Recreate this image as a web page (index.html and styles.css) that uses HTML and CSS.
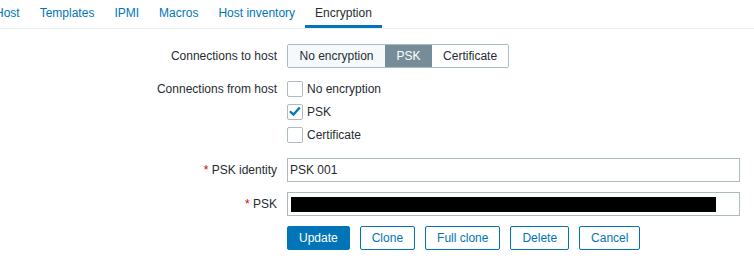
FILE: index.html
```html
<!DOCTYPE html>
<html>
<head>
<meta charset="utf-8">
<link rel="stylesheet" href="styles.css">
</head>
<body>
<nav class="tabs">
  <a class="tab">Host</a>
  <a class="tab">Templates</a>
  <a class="tab">IPMI</a>
  <a class="tab">Macros</a>
  <a class="tab">Host inventory</a>
  <a class="tab active">Encryption</a>
</nav>
<form class="form">
  <div class="label">Connections to host</div>
  <div class="control">
    <div class="seg">
      <span class="seg-item first">No encryption</span>
      <span class="seg-item on">PSK</span>
      <span class="seg-item">Certificate</span>
    </div>
  </div>

  <div class="label top">Connections from host</div>
  <ul class="checks">
    <li class="check"><span class="box"></span><span>No encryption</span></li>
    <li class="check"><span class="box"><svg width="14" height="14" viewBox="0 0 14 14"><polyline points="1.9,6.2 5.4,9.6 11.8,2.4" fill="none" stroke="#0275b8" stroke-width="2.2"/></svg></span><span>PSK</span></li>
    <li class="check last"><span class="box"></span><span>Certificate</span></li>
  </ul>

  <div class="label"><span class="req">*</span> PSK identity</div>
  <div class="control"><input class="field" type="text" value="PSK 001"></div>

  <div class="label"><span class="req">*</span> PSK</div>
  <div class="control"><div class="field pad"><span class="redact"></span></div></div>

  <div class="buttons">
    <span class="btn primary">Update</span>
    <span class="btn">Clone</span>
    <span class="btn">Full clone</span>
    <span class="btn">Delete</span>
    <span class="btn">Cancel</span>
  </div>
</form>
</body>
</html>
```

FILE: styles.css
```css
html, body {
  margin: 0;
  padding: 0;
  background: #ffffff;
}
body {
  font-family: "Liberation Sans", Arial, sans-serif;
  font-size: 12px;
  color: #1f2c33;
  width: 754px;
  height: 261px;
  overflow: hidden;
}
.tabs {
  display: flex;
  margin-left: -15px;
  border-bottom: 1px solid #ebeef0;
  height: 28px;
}
.tab {
  display: block;
  padding: 6px 10px 6px 10px;
  line-height: 14px;
  border-bottom: 3px solid transparent;
  color: #0275b8;
  white-space: nowrap;
}
.tab.active {
  color: #1f2c33;
  border-bottom-color: #0275b8;
}
.form {
  margin: 15px 0 0 0;
  display: grid;
  grid-template-columns: 277px 453px;
  column-gap: 10px;
  row-gap: 10px;
}
.label {
  text-align: right;
  line-height: 24px;
  white-space: nowrap;
}
.label.top {
  line-height: 23px;
}
.req {
  color: #d40000;
}
.control {
  display: flex;
  align-items: center;
  height: 24px;
}
.seg {
  display: inline-flex;
  border: 1px solid #acbbc2;
  border-radius: 2px;
  overflow: hidden;
}
.seg-item {
  display: block;
  line-height: 22px;
  padding: 0 11px;
  background: #ffffff;
  white-space: nowrap;
}
.seg-item.first {
  background: #f6f9fb;
  padding: 0 11.5px;
}
.seg-item.on {
  background: #768d99;
  color: #ffffff;
  padding: 0 11.5px;
}
.checks {
  list-style: none;
  margin: 0;
  padding: 0;
}
.check {
  display: flex;
  align-items: flex-start;
  height: 23px;
}
.check.last {
  height: 24px;
}
.box {
  box-sizing: border-box;
  width: 16px;
  height: 16px;
  margin-top: 3px;
  margin-right: 4px;
  border: 1px solid #acbbc2;
  border-radius: 2px;
  background: #ffffff;
  display: flex;
  align-items: center;
  justify-content: center;
}
.box svg {
  display: block;
}
.check span:last-child {
  line-height: 22px;
}
.field {
  box-sizing: border-box;
  width: 453px;
  height: 24px;
  margin: 0;
  border: 1px solid #acbbc2;
  border-radius: 0;
  padding: 0 2px;
  font: inherit;
  color: #1f2c33;
  background: #ffffff;
  outline: none;
}
.field.pad {
  display: flex;
  align-items: center;
  padding: 0 3px;
}
.redact {
  display: block;
  width: 425px;
  height: 15px;
  background: #000000;
}
.buttons {
  grid-column: 2;
  display: flex;
  gap: 10px;
}
.btn {
  display: block;
  box-sizing: border-box;
  height: 24px;
  line-height: 22px;
  padding: 0 11px;
  border: 1px solid #0275b8;
  border-radius: 2px;
  background: #ffffff;
  color: #0275b8;
  white-space: nowrap;
}
.btn.primary {
  background: #0275b8;
  color: #ffffff;
}
```
